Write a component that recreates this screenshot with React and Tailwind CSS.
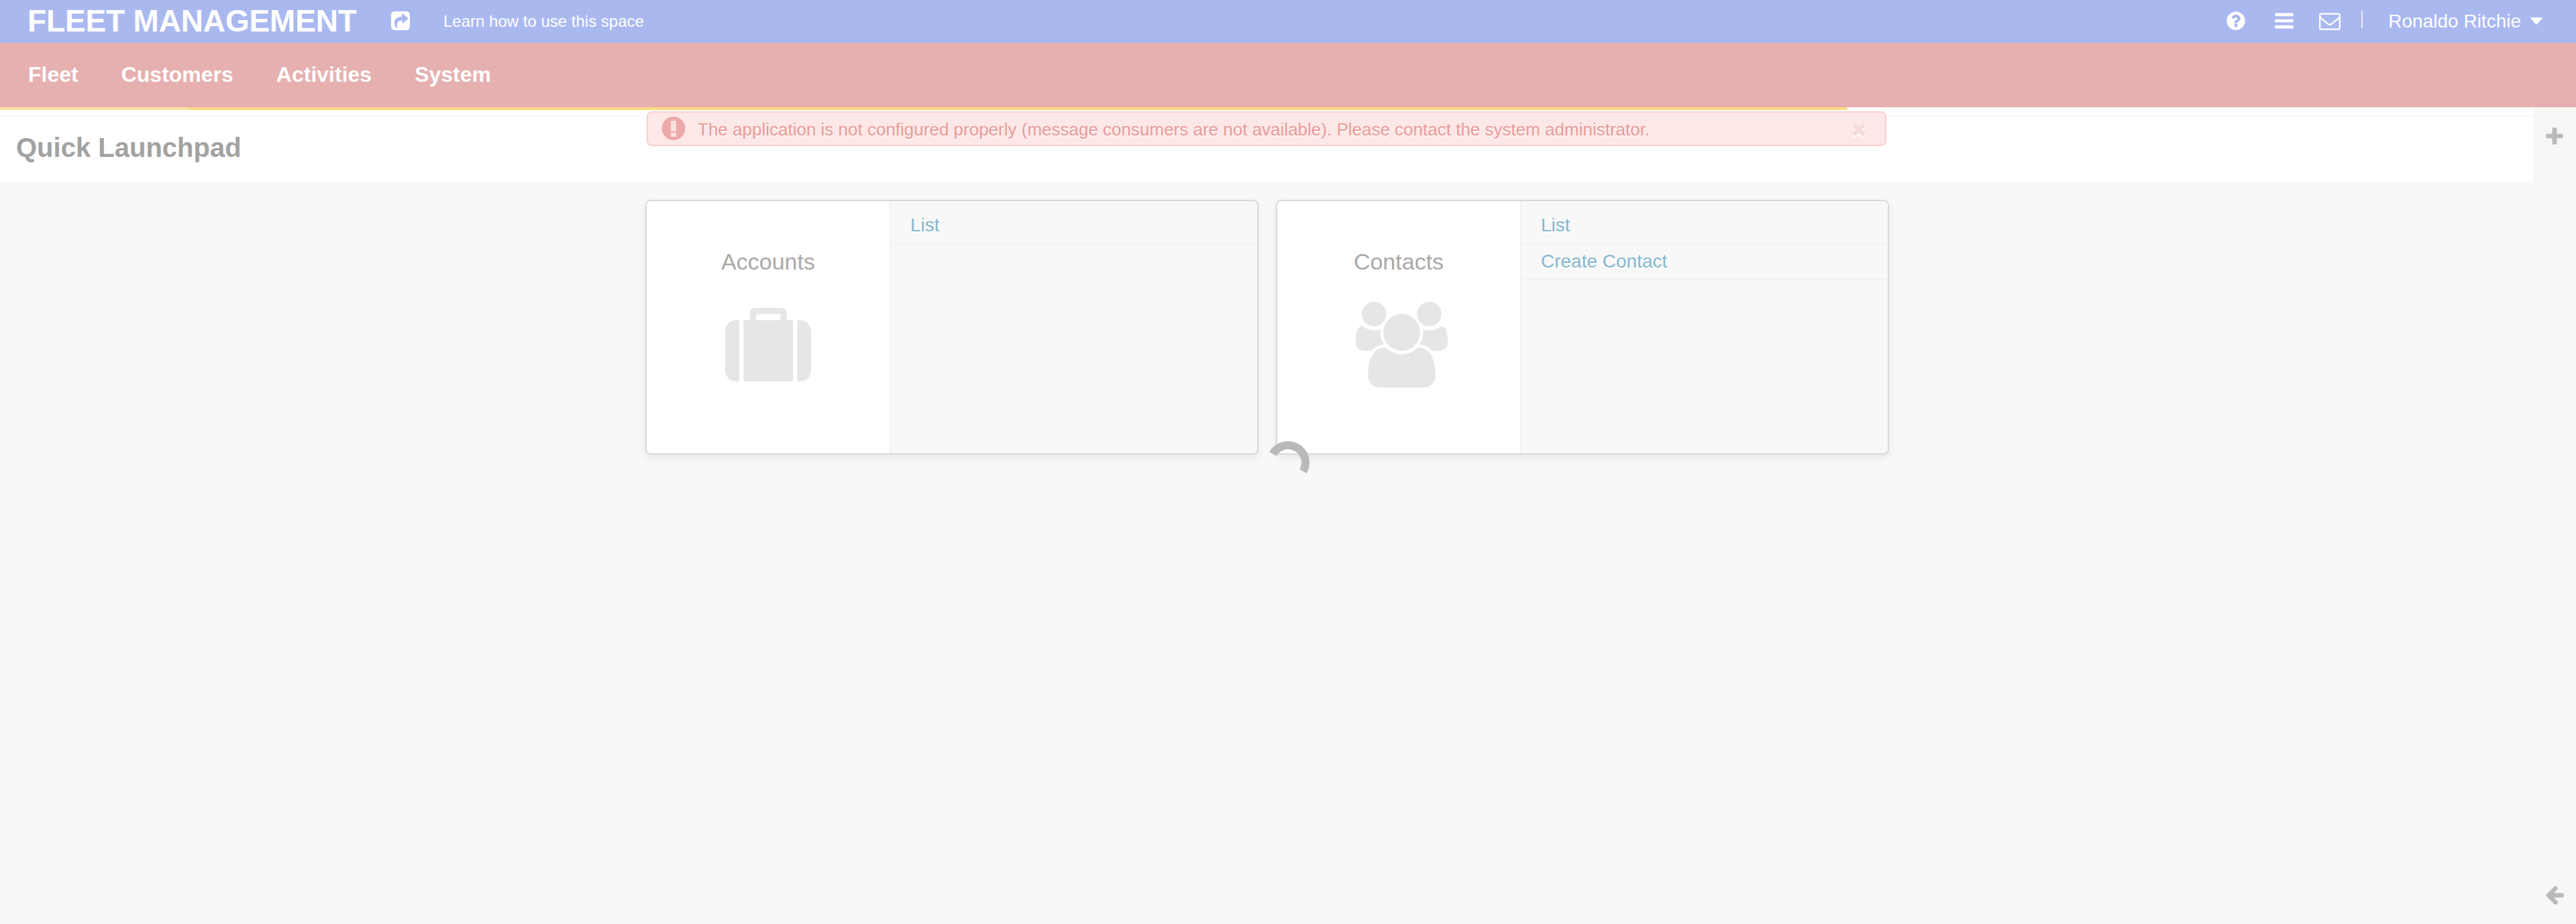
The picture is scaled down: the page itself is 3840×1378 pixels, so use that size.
import React from "react";

const PATHS = {
  question: "M1024 1376v-192q0-14-9-23t-23-9h-192q-14 0-23 9t-9 23v192q0 14 9 23t23 9h192q14 0 23-9t9-23zm256-672q0-88-55.5-163t-138.5-116-170-41q-243 0-371 213-15 24 8 42l132 100q7 6 19 6 16 0 25-12 53-68 86-92 34-24 86-24 48 0 85.500 26t37.500 59q0 38-20 61t-68 45q-63 28-115.500 86.500t-52.500 125.500v36q0 14 9 23t23 9h192q14 0 23-9t9-23q0-19 21.500-49.500t54.500-49.500q32-18 49-28.500t46-35 44.500-48 28-60.500 12.500-81zm384 192q0 209-103 385.500t-279.500 279.500-385.500 103-385.500-103-279.500-279.500-103-385.500 103-385.500 279.500-279.500 385.500-103 385.500 103 279.500 279.500 103 385.500z",
  bars: "M1664 1344v128q0 26-19 45t-45 19h-1408q-26 0-45-19t-19-45v-128q0-26 19-45t45-19h1408q26 0 45 19t19 45zm0-512v128q0 26-19 45t-45 19h-1408q-26 0-45-19t-19-45v-128q0-26 19-45t45-19h1408q26 0 45 19t19 45zm0-512v128q0 26-19 45t-45 19h-1408q-26 0-45-19t-19-45v-128q0-26 19-45t45-19h1408q26 0 45 19t19 45z",
  envelope: "M1664 1504v-768q-32 36-69 66-268 206-426 338-51 43-83 67t-86.500 48.500-102.500 24.500h-2q-48 0-102.500-24.500t-86.500-48.500-83-67q-158-132-426-338-37-30-69-66v768q0 13 9.500 22.500t22.500 9.500h1472q13 0 22.500-9.500t9.500-22.500zm0-1051v-24.500l-.5-13-3-12.500-5.500-9-9-7.500-14-2.500h-1472q-13 0-22.500 9.500t-9.500 22.500q0 168 147 284 193 152 401 317 6 5 35 29.500t46 37.500 44.500 31.500 50.500 27.500 43 9h2q20 0 43-9t50.500-27.500 44.500-31.500 46-37.500 35-29.500q208-165 401-317 54-43 100.500-115.500t46.500-131.500zm128-37v1088q0 66-47 113t-113 47h-1472q-66 0-113-47t-47-113v-1088q0-66 47-113t113-47h1472q66 0 113 47t47 113z",
  plus: "M1600 736v192q0 40-28 68t-68 28h-416v416q0 40-28 68t-68 28h-192q-40 0-68-28t-28-68v-416h-416q-40 0-68-28t-28-68v-192q0-40 28-68t68-28h416v-416q0-40 28-68t68-28h192q40 0 68 28t28 68v416h416q40 0 68 28t28 68z",
  arrowLeft: "M1664 896v128q0 53-32.500 90.500t-84.500 37.500h-704l293 294q38 36 38 90t-38 90l-75 76q-37 37-90 37-52 0-91-37l-651-652q-37-37-37-90 0-52 37-91l651-650q38-38 91-38 52 0 90 38l75 74q38 38 38 91t-38 91l-293 293h704q52 0 84.500 37.500t32.500 90.500z",
  times: "M1490 1322q0 40-28 68l-136 136q-28 28-68 28t-68-28l-294-294-294 294q-28 28-68 28t-68-28l-136-136q-28-28-28-68t28-68l294-294-294-294q-28-28-28-68t28-68l136-136q28-28 68-28t68 28l294 294 294-294q28-28 68-28t68 28l136 136q28 28 28 68t-28 68l-294 294 294 294q28 28 28 68z",
};

function Glyph({ name, className }) {
  return (
    <svg viewBox="0 0 1792 1792" fill="currentColor" className={className} aria-hidden="true">
      <path d={PATHS[name]} />
    </svg>
  );
}

function ShareIcon() {
  return (
    <svg viewBox="0 0 28 28" className="mb-0.5 h-7 w-7 shrink-0" aria-hidden="true">
      <rect width="28" height="28" rx="5" fill="#fff" />
      <path
        d="M8.300 25.300C3 19.500 3 7.800 16.500 7.800V4q.2-1.200 1.200-.4l7.300 6.200q.8.800 0 1.600l-7.300 6.200q-1 .8-1.200-.4V13.500C9.500 13.500 8 17 9.300 24.500q.2 1.500-1 .8z"
        fill="#aab8f0"
      />
    </svg>
  );
}

function SuitcaseIcon() {
  return (
    <svg viewBox="0 0 128 110" fill="#e6e6e6" className="h-[110px] w-32" aria-hidden="true">
      <path d="M21 18.500v91.500h-4.500A16.500 16.500 0 0 1 0 93.500V35A16.500 16.500 0 0 1 16.500 18.500z" />
      <path d="M107.500 18.500v91.500h4A16.500 16.500 0 0 0 128 93.500V35a16.500 16.500 0 0 0-16.500-16.500z" />
      <path d="M27.500 18.500H37V7A7 7 0 0 1 44 0h40.500a7 7 0 0 1 7 7v11.500h9.500V110h-73.500zM46 9.500v9h36.500v-9z" fillRule="evenodd" />
    </svg>
  );
}

function UsersIcon() {
  return (
    <svg viewBox="0 0 1920 1792" fill="#e6e6e6" className="h-32 w-[137px]" aria-hidden="true">
      <path d="M593 896q-162 5-265 128h-134q-82 0-138-40.500t-56-118.500q0-353 124-353 6 0 43.500 21t97.500 42.500 119 21.500q67 0 133-23-5 37-5 66 0 139 81 256zm1071 637q0 120-73 189.500t-194 69.500h-874q-121 0-194-69.500t-73-189.500q0-53 3.500-103.500t14-109 26.500-108.500 43-97.500 62-81 85.500-53.500 111.500-20q10 0 43 21.500t73 48 107 48 135 21.500 135-21.500 107-48 73-48 43-21.500q61 0 111.500 20t85.500 53.500 62 81 43 97.500 26.500 108.500 14 109 3.500 103.500zm-1024-1277q0 106-75 181t-181 75-181-75-75-181 75-181 181-75 181 75 75 181zm704 384q0 159-112.500 271.500t-271.500 112.500-271.500-112.500-112.500-271.500 112.500-271.500 271.500-112.500 271.500 112.500 112.500 271.500zm576 225q0 78-56 118.500t-138 40.500h-134q-103-123-265-128 81-117 81-256 0-29-5-66 66 23 133 23 59 0 119-21.500t97.500-42.500 43.500-21q124 0 124 353zm-128-609q0 106-75 181t-181 75-181-75-75-181 75-181 181-75 181 75 75 181z" />
    </svg>
  );
}

function Header() {
  return (
    <header className="flex h-16 items-center bg-[#aab8f0] text-white">
      <h1 className="mb-0.5 ml-[41px] w-[542px] whitespace-nowrap text-[46px] leading-[62px] font-bold tracking-[-0.15px]">
        FLEET MANAGEMENT
      </h1>
      <ShareIcon />
      <span className="ml-[50px] text-[24px] leading-[64px]">Learn how to use this space</span>
      <div className="ml-auto flex items-center">
        <Glyph name="question" className="mb-[3px] h-8 w-8" />
        <Glyph name="bars" className="mb-[3px] ml-10 h-8 w-8" />
        <Glyph name="envelope" className="mb-[3px] ml-9 h-8 w-8" />
        <span className="mb-[6px] ml-[31px] h-[26px] w-0.5 bg-[#eceef4]" />
        <span className="ml-[38px] text-[28px] leading-[64px]">Ronaldo Ritchie</span>
        <svg viewBox="0 0 18 11" className="mr-[50px] mb-0.5 ml-[14px] h-[11px] w-[18px]" fill="#fff" aria-hidden="true">
          <path d="M1 0h16q1.500 0 .5 1.500L10 10q-1 1-2 0L.5 1.500Q-.5 0 1 0z" />
        </svg>
      </div>
    </header>
  );
}

function NavBar() {
  return (
    <nav className="flex h-24 items-center gap-16 bg-[#e6b0b0] pb-[3px] pl-[42px] text-[32px] font-bold text-white">
      <span>Fleet</span>
      <span>Customers</span>
      <span>Activities</span>
      <span>System</span>
    </nav>
  );
}

function Alert() {
  return (
    <div className="absolute top-[6px] left-[964px] flex h-[52px] w-[1848px] items-center rounded-lg border-2 border-[#fbcfcf] bg-[#fde8e7] text-[#e89b99]">
      <svg viewBox="0 0 36 36" className="ml-5 h-9 w-9" aria-hidden="true">
        <circle cx="18" cy="17.500" r="17.500" fill="#eda9a9" />
        <rect x="14" y="6" width="8" height="16" rx="1" fill="#fbe0df" />
        <rect x="14" y="24" width="8" height="6" rx="1" fill="#fbe0df" />
      </svg>
      <span className="mt-0.5 ml-[18px] whitespace-nowrap text-[26px] leading-[46px] [text-shadow:0_2px_0_rgba(255,255,255,0.6)]">
        The application is not configured properly (message consumers are not available). Please contact the system administrator.
      </span>
      <Glyph name="times" className="mt-0.5 mr-[25px] ml-auto h-7 w-7 text-[#f3dadb] drop-shadow-[0_2px_0_#ffffff]" />
    </div>
  );
}

function Card({ title, icon, iconClass, links }) {
  return (
    <section className="flex h-[380px] w-[914px] overflow-hidden rounded-lg border-2 border-[#d9d9d9] bg-[#f8f8f8] shadow-[0_4px_12px_rgba(0,0,0,0.08)]">
      <div className="flex w-[364px] shrink-0 flex-col items-center border-r-2 border-[#f2f2f2] bg-white">
        <h3 className="mt-[70px] text-[34px] leading-10 text-[#a9a9a9]">{title}</h3>
        <div className={iconClass}>{icon}</div>
      </div>
      <ul className="flex-1 pt-2.5">
        {links.map((link) => (
          <li
            key={link}
            className="h-[54px] border-b-2 border-[#f2f2f2] pl-[29px] text-[28px] leading-[52px] text-[#85b7cf] [text-shadow:0_2px_0_#ffffff]"
          >
            {link}
          </li>
        ))}
      </ul>
    </section>
  );
}

export default function App() {
  return (
    <div className="flex h-[1378px] w-[3840px] flex-col overflow-hidden bg-[#f8f8f8] font-['Liberation_Sans',Arial,sans-serif]">
      <Header />
      <NavBar />
      <div className="relative flex flex-1">
        <main className="flex-1">
          <div className="h-3 bg-white" />
          <div className="flex h-[98px] items-center border-t-2 border-[#f8f8f8] bg-white pb-1 pl-6">
            <h2 className="text-[40px] leading-[48px] font-bold text-[#a2a2a2]">Quick Launchpad</h2>
          </div>
          <div className="flex gap-[26px] pt-7 pl-[962px]">
            <Card title="Accounts" icon={<SuitcaseIcon />} iconClass="mt-[49px]" links={["List"]} />
            <Card title="Contacts" icon={<UsersIcon />} iconClass="mt-10 ml-[9px]" links={["List", "Create Contact"]} />
          </div>
        </main>
        <aside className="flex w-16 flex-col items-center justify-between bg-[#f7f8f6] pt-7 pb-7 text-[#bababa]">
          <Glyph name="plus" className="h-8 w-8" />
          <Glyph name="arrowLeft" className="h-8 w-8" />
        </aside>
        <div className="absolute top-0 left-0 flex h-1 w-[2754px] overflow-hidden rounded-r-sm bg-[#fdd97d]">
          <div className="w-[280px] bg-[#fee4a2]" />
        </div>
        <Alert />
        <svg viewBox="0 0 64 64" className="absolute top-[498px] left-[1888px] h-16 w-16" fill="none" aria-hidden="true">
          <path d="M9.480 19A26 26 0 0 1 54.520 45" stroke="#b9b9b9" strokeWidth="12" />
        </svg>
      </div>
    </div>
  );
}
